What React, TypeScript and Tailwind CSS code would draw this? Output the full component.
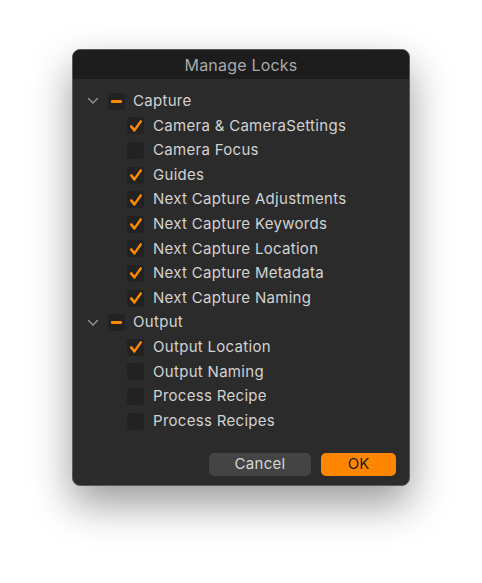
import React from "react";

type Item = { label: string; checked: boolean };

const groups: { name: string; items: Item[] }[] = [
  {
    name: "Capture",
    items: [
      { label: "Camera & CameraSettings", checked: true },
      { label: "Camera Focus", checked: false },
      { label: "Guides", checked: true },
      { label: "Next Capture Adjustments", checked: true },
      { label: "Next Capture Keywords", checked: true },
      { label: "Next Capture Location", checked: true },
      { label: "Next Capture Metadata", checked: true },
      { label: "Next Capture Naming", checked: true },
    ],
  },
  {
    name: "Output",
    items: [
      { label: "Output Location", checked: true },
      { label: "Output Naming", checked: false },
      { label: "Process Recipe", checked: false },
      { label: "Process Recipes", checked: false },
    ],
  },
];

function Check({ checked }: { checked: boolean }) {
  return (
    <div className="w-[17px] h-[17px] rounded-[3px] bg-[#222222] flex items-center justify-center shrink-0">
      {checked && (
        <svg width="14" height="14" viewBox="0 0 14 14">
          <path d="M2.2 7.4 L5.4 11.4 L11.8 2.4" fill="none" stroke="#ff8a00" strokeWidth="2.5" strokeLinecap="round" strokeLinejoin="round" />
        </svg>
      )}
    </div>
  );
}

function Mixed() {
  return (
    <div className="w-[17px] h-[17px] rounded-[3px] bg-[#222222] flex items-center justify-center shrink-0">
      <div className="w-[11px] h-[3px] rounded-[1px] bg-[#ff8a00]" />
    </div>
  );
}

function Chevron() {
  return (
    <svg width="12" height="8" viewBox="0 0 12 8" className="shrink-0">
      <path d="M1.5 1.5 L6 6 L10.5 1.5" fill="none" stroke="#9a9a9a" strokeWidth="1.2" strokeLinecap="round" strokeLinejoin="round" />
    </svg>
  );
}

export default function App() {
  return (
    <div
      className="w-[482px] h-[583px] bg-white pt-[49px] pl-[72px]"
      style={{ fontFamily: "Inter, 'Noto Sans', sans-serif" }}
    >
      <div className="w-[338px] h-[437px] rounded-[8px] border border-[#5a5a5a] bg-[#2b2b2b] overflow-hidden flex flex-col shadow-[0_18px_40px_rgba(0,0,0,0.4)]">
        <div className="h-[29px] bg-[#1d1d1d] flex items-center justify-center text-[16px] tracking-[0.2px] text-[#a9a9a9] shrink-0">
          Manage Locks
        </div>
        <div className="pt-[10px] flex flex-col">
          {groups.map((g) => (
            <div key={g.name} className="flex flex-col">
              <div className="h-[24.6px] flex items-center pl-[14px]">
                <Chevron />
                <div className="ml-[9px]">
                  <Mixed />
                </div>
                <span className="ml-[8px] text-[15px] tracking-[0.3px] text-[#d2d2d2]">{g.name}</span>
              </div>
              {g.items.map((it) => (
                <div key={it.label} className="h-[24.6px] flex items-center pl-[54px]">
                  <Check checked={it.checked} />
                  <span className="ml-[9px] text-[15px] tracking-[0.3px] text-[#d2d2d2]">{it.label}</span>
                </div>
              ))}
            </div>
          ))}
        </div>
        <div className="mt-auto pb-[9px] pr-[13px] flex justify-end gap-[10px]">
          <button className="w-[102px] h-[23px] rounded-[5px] bg-[#444444] text-[15px] tracking-[0.3px] text-[#d6d6d6] flex items-center justify-center">
            Cancel
          </button>
          <button className="w-[75px] h-[23px] rounded-[5px] bg-[#ff8600] text-[15px] text-[#1e1e1e] flex items-center justify-center">
            OK
          </button>
        </div>
      </div>
    </div>
  );
}
